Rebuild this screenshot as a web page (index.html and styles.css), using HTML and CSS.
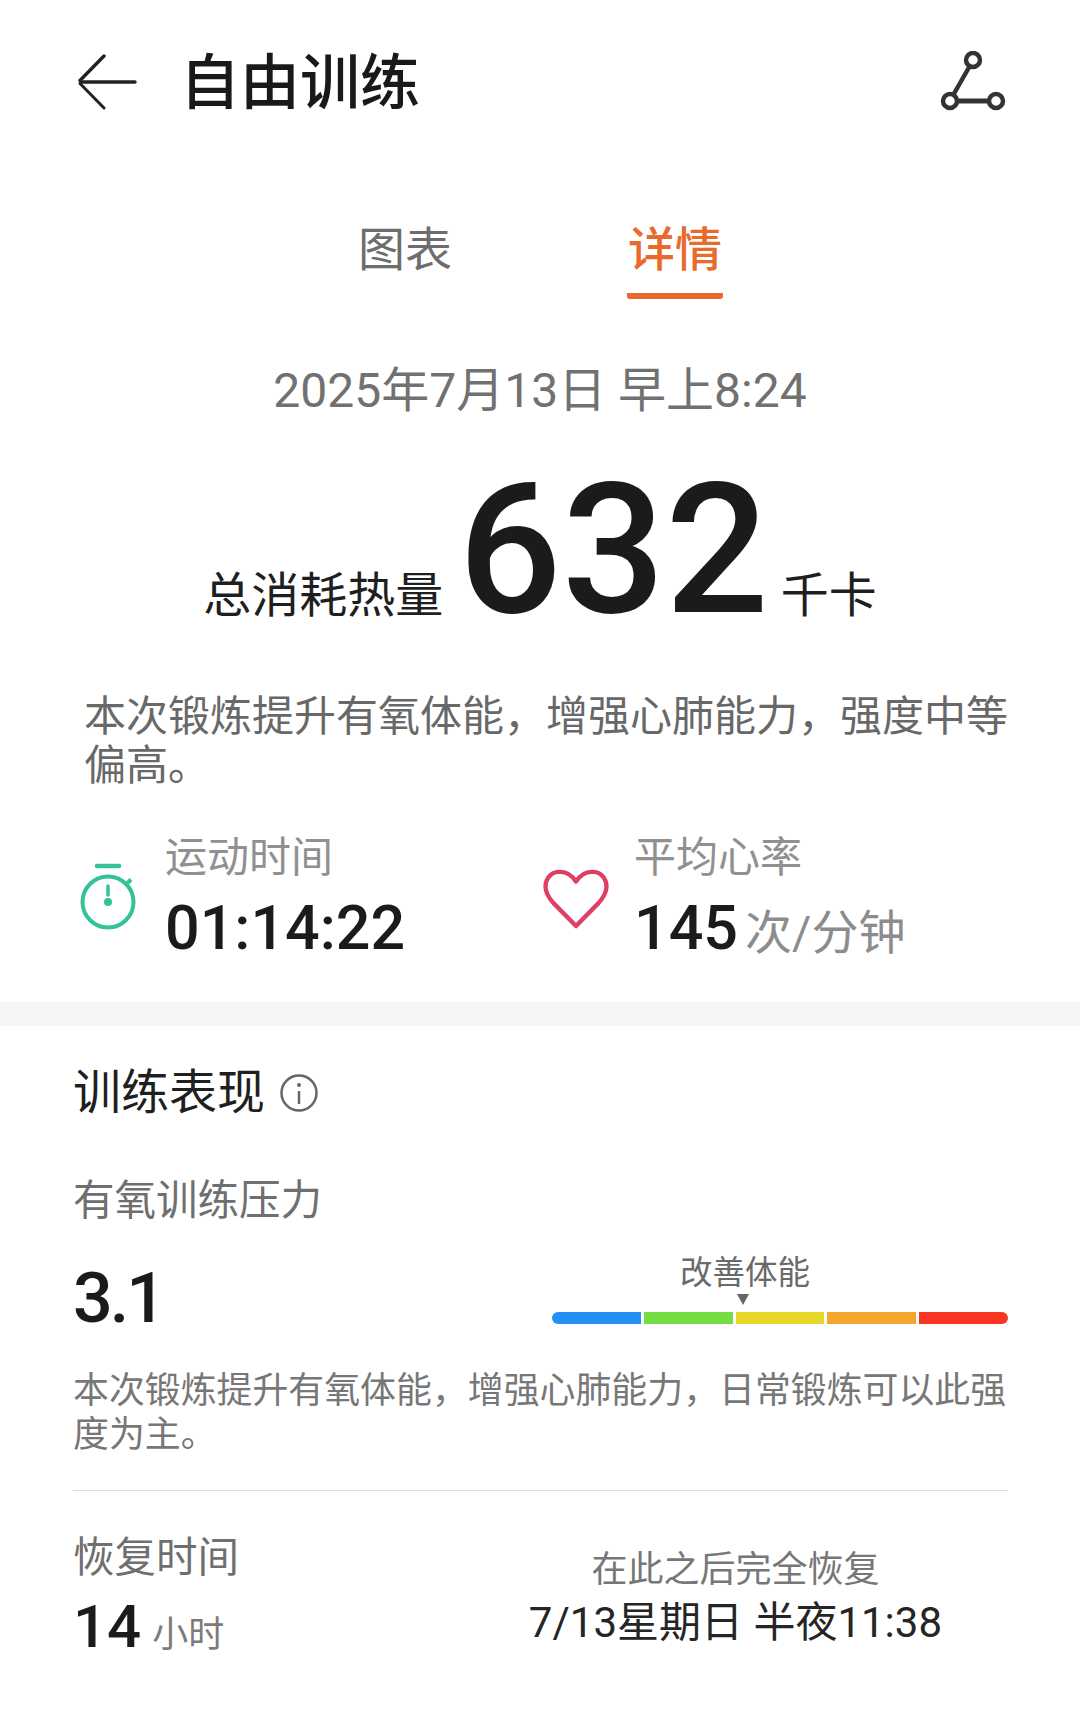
FILE: index.html
```html
<!DOCTYPE html>
<html lang="zh-CN">
<head>
  <meta charset="UTF-8" />
  <meta name="viewport" content="width=device-width, initial-scale=1.0" />
  <title>自由训练</title>
  <link rel="stylesheet" href="styles.css">
</head>
<body>
  <header class="topbar">
    <svg class="back-icon" width="60" height="56" viewBox="0 0 60 56" fill="none" stroke="#222" stroke-width="3.4" stroke-linecap="round" stroke-linejoin="round">
      <path d="M3 28H57"/>
      <path d="M26 2L2 26.500"/>
      <path d="M2 29.500L26 54" stroke-width="3"/>
    </svg>
    <h1 class="page-title">自由训练</h1>
    <svg class="route-icon" width="68" height="62" viewBox="0 0 68 62" fill="none" stroke="#333" stroke-width="4.500">
      <circle cx="34" cy="9" r="7"/>
      <circle cx="11" cy="50" r="7"/>
      <circle cx="57" cy="50" r="7"/>
      <path d="M30.500 15.500L14.500 43.500"/>
      <path d="M18 50H50" stroke-width="5"/>
    </svg>
  </header>

  <nav class="tabs">
    <div class="tab">图表</div>
    <div class="tab tab-active">详情</div>
  </nav>

  <p class="date">2025年7月13日 早上8:24</p>

  <div class="calories">
    <span class="calories-label">总消耗热量</span>
    <span class="calories-value">632</span>
    <span class="calories-label calories-unit">千卡</span>
  </div>

  <p class="summary">本次锻炼提升有氧体能，增强心肺能力，强度中等偏高。</p>

  <div class="stats">
    <div class="stat">
      <svg class="stat-icon icon-timer" width="60" height="70" viewBox="0 0 60 70" fill="none" stroke="#35c29b" stroke-width="4">
        <path d="M19 4H41" stroke-width="4.500" stroke-linecap="round"/>
        <circle cx="30" cy="40" r="25.500"/>
        <path d="M48.500 22L53 17.500" stroke-width="4"/>
        <path d="M30 24V33" stroke-width="3.500" stroke-linecap="round"/>
        <circle cx="30" cy="40" r="4" fill="#35c29b" stroke="none"/>
      </svg>
      <div>
        <div class="stat-label">运动时间</div>
        <div class="stat-value">01:14:22</div>
      </div>
    </div>
    <div class="stat stat-heart">
      <svg class="stat-icon icon-heart" width="66" height="60" viewBox="0 0 68 62" fill="none" stroke="#de3f62" stroke-width="4.500" stroke-linejoin="round">
        <path d="M34 13C29 5 22 2.500 16 3C8 3.500 2.500 10 2.500 18C2.500 25 6 30 11 35.500L34 59L57 35.500C62 30 65.500 25 65.500 18C65.500 10 60 3.500 52 3C46 2.500 39 5 34 13Z"/>
      </svg>
      <div>
        <div class="stat-label">平均心率</div>
        <div class="stat-value">145<span class="stat-unit">次/分钟</span></div>
      </div>
    </div>
  </div>

  <div class="band"></div>

  <section class="performance">
    <div class="section-head">
      <h2 class="section-title">训练表现</h2>
      <svg width="40" height="40" viewBox="0 0 40 40" fill="none" stroke="#666" stroke-width="2.500">
        <circle cx="20" cy="20" r="17.500"/>
        <path d="M20 18V31"/>
        <circle cx="20" cy="12" r="2" fill="#666" stroke="none"/>
      </svg>
    </div>

    <div class="metric-label">有氧训练压力</div>
    <div class="metric-row">
      <div class="metric-value">3.1</div>
      <div class="scale">
        <div class="scale-caption">改善体能</div>
        <div class="scale-pointer"></div>
        <div class="scale-bar">
          <span class="seg seg-blue"></span>
          <span class="seg seg-green"></span>
          <span class="seg seg-yellow"></span>
          <span class="seg seg-orange"></span>
          <span class="seg seg-red"></span>
        </div>
      </div>
    </div>
    <p class="metric-desc">本次锻炼提升有氧体能，增强心肺能力，日常锻炼可以此强度为主。</p>

    <div class="recovery">
      <div>
        <div class="metric-label recovery-label">恢复时间</div>
        <div class="recovery-value">14<span class="recovery-unit">小时</span></div>
      </div>
      <div class="recovery-side">
        <div class="recovery-note">在此之后完全恢复</div>
        <div class="recovery-time">7/13星期日 半夜11:38</div>
      </div>
    </div>
  </section>
</body>
</html>
```

FILE: styles.css
```css
/* Base styles */
body {
  margin: 0;
  background: #fff;
  color: #1b1b1b;
  font-family: Roboto, "Noto Sans CJK SC", sans-serif;
  overflow: hidden;
}
h1, h2, p {
  margin: 0;
  font-weight: normal;
}
svg {
  display: block;
  flex: none;
}

/* Top bar */
.topbar {
  display: flex;
  align-items: center;
  height: 56px;
  padding: 54px 73px 0 78px;
}
.page-title {
  margin: 4px 0 0 42px;
  font-size: 60px;
  line-height: 56px;
  font-weight: 500;
  color: #191919;
}
.route-icon {
  margin-left: auto;
}

/* Tabs */
.tabs {
  display: flex;
  justify-content: center;
  gap: 174px;
  margin-top: 108px;
}
.tab {
  width: 96px;
  height: 81px;
  box-sizing: border-box;
  font-size: 47px;
  line-height: 64px;
  text-align: center;
  color: #6d6d6d;
}
.tab-active {
  color: #e96a2d;
  font-weight: 500;
  border-bottom: 6px solid #e96a2d;
  border-radius: 0 0 3px 3px;
}

/* Date and calories */
.date {
  margin-top: 60px;
  font-size: 48px;
  line-height: 64px;
  text-align: center;
  color: #717171;
}
.calories {
  display: flex;
  justify-content: center;
  align-items: baseline;
  height: 190px;
  margin-top: 32px;
}
.calories-label {
  font-size: 48px;
  font-weight: 400;
  color: #1f1f1f;
}
.calories-value {
  margin: 0 12px 0 15px;
  font-size: 182px;
  line-height: 190px;
  font-weight: 500;
  color: #1b1b1b;
}
.summary {
  margin-top: 47px;
  padding: 0 60px 0 84px;
  font-size: 42px;
  line-height: 49px;
  color: #686868;
}

/* Stats row */
.stats {
  display: flex;
  height: 140px;
  margin-top: 40px;
  padding-left: 78px;
}
.stat {
  display: flex;
  gap: 27px;
  width: 465px;
}
.stat-heart {
  gap: 25px;
}
.icon-timer {
  margin-top: 32px;
}
.icon-heart {
  margin-top: 39px;
}
.stat-label {
  font-size: 42px;
  line-height: 56px;
  color: #909090;
}
.stat-value {
  font-size: 61px;
  line-height: 84px;
  font-weight: 500;
  color: #1b1b1b;
}
.stat-unit {
  margin-left: 7px;
  font-size: 47px;
  font-weight: 400;
  color: #8c8c8c;
}
.band {
  height: 24px;
  margin-top: 32px;
  background: #f6f6f6;
}

/* Training performance */
.performance {
  padding: 0 72px 0 73px;
}
.section-head {
  display: flex;
  align-items: center;
  gap: 14px;
  margin-top: 34px;
}
.section-title {
  font-size: 48px;
  line-height: 66px;
  font-weight: 400;
  color: #1f1f1f;
}
.metric-label {
  margin-top: 47px;
  font-size: 41.500px;
  line-height: 56px;
  color: #6f6f6f;
}
.metric-row {
  display: flex;
  justify-content: space-between;
  height: 98px;
}
.metric-value {
  margin-top: 24px;
  font-size: 70px;
  line-height: 90px;
  font-weight: 500;
  letter-spacing: -3px;
}
.scale {
  display: flex;
  flex-direction: column;
  align-self: flex-end;
  width: 456px;
  padding-bottom: 3px;
}
.scale-caption {
  margin-left: 128px;
  font-size: 32.500px;
  line-height: 40px;
  color: #6a6a6a;
}
.scale-pointer {
  width: 0;
  height: 0;
  margin: 1px 0 7px 185px;
  border-left: 6px solid transparent;
  border-right: 6px solid transparent;
  border-top: 11px solid #666;
}
.scale-bar {
  display: flex;
  gap: 3px;
  width: 100%;
  height: 12px;
}
.seg {
  flex: 1;
}
.seg-blue {
  background: #2490f5;
  border-radius: 6px 0 0 6px;
}
.seg-green {
  background: #74dd41;
}
.seg-yellow {
  background: #e6d628;
}
.seg-orange {
  background: #f3a629;
}
.seg-red {
  background: #fb3524;
  border-radius: 0 6px 6px 0;
}
.metric-desc {
  margin-top: 42px;
  padding-bottom: 33px;
  border-bottom: 1px solid #dcdcdc;
  font-size: 35.900px;
  line-height: 44px;
  color: #777;
}

/* Recovery */
.recovery {
  display: flex;
  justify-content: space-between;
  padding-right: 66px;
}
.recovery-label {
  margin-top: 39px;
  color: #6f6f6f;
}
.recovery-value {
  margin-top: 6px;
  font-size: 60px;
  line-height: 70px;
  font-weight: 500;
}
.recovery-unit {
  margin-left: 11px;
  font-size: 36px;
  font-weight: 400;
  color: #7c7c7c;
}
.recovery-side {
  margin-top: 54px;
  text-align: center;
}
.recovery-note {
  font-size: 36px;
  line-height: 50px;
  color: #777;
}
.recovery-time {
  font-size: 42px;
  line-height: 56px;
  color: #252525;
}
```
